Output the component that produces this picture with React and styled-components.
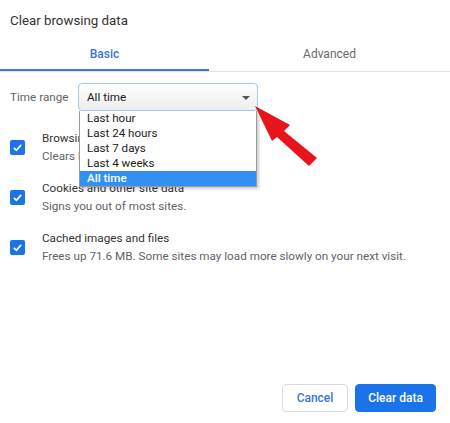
import styled, { createGlobalStyle } from "styled-components";

const GlobalStyle = createGlobalStyle`
  body {
    margin: 0;
    background: #fff;
    font-family: Roboto, "Liberation Sans", Arial, sans-serif;
  }
`;

const Dialog = styled.div`
  position: relative;
  width: 450px;
  height: 423px;
  display: flex;
  flex-direction: column;
  background: #fff;
  overflow: hidden;
`;

const Title = styled.h1`
  margin: 0;
  padding: 11px 10px 0;
  font-size: 13.3px;
  line-height: 20px;
  font-weight: 400;
  color: #333;
`;

const TabBar = styled.div`
  display: flex;
  margin-top: 5px;
  border-bottom: 1px solid #e3e3e3;
`;

const Tab = styled.div`
  height: 35px;
  display: flex;
  align-items: center;
  justify-content: center;
  font-size: 12px;
  font-weight: ${(p) => (p.$active ? 500 : 400)};
  color: ${(p) => (p.$active ? "#3a78d4" : "#6a6a6a")};
  box-shadow: ${(p) => (p.$active ? "inset 0 -2px 0 #3a78d4" : "none")};
  width: ${(p) => (p.$active ? "209px" : "auto")};
  flex: ${(p) => (p.$active ? "none" : "1")};
`;

const TimeRow = styled.div`
  display: flex;
  align-items: center;
  margin-top: 11px;
  height: 28px;
`;

const Label = styled.span`
  flex: none;
  width: 78px;
  padding-left: 10px;
  box-sizing: border-box;
  white-space: nowrap;
  font-size: 11.7px;
  color: #5f6368;
`;

const SelectWrap = styled.div`
  position: relative;
  flex: none;
  width: 180px;
  height: 28px;
`;

const SelectBox = styled.div`
  box-sizing: border-box;
  height: 28px;
  display: flex;
  align-items: center;
  justify-content: space-between;
  padding: 0 7px 0 8px;
  border: 1px solid #a8c6ef;
  border-radius: 4px;
  background: linear-gradient(#ffffff, #ededed);
  font-size: 11.7px;
  color: #202124;
`;

const Caret = styled.span`
  width: 0;
  height: 0;
  border-left: 4px solid transparent;
  border-right: 4px solid transparent;
  border-top: 4px solid #555;
  margin-top: 1px;
`;

const Menu = styled.ul`
  position: absolute;
  top: 28px;
  left: 1px;
  width: 178px;
  margin: 0;
  padding: 0;
  list-style: none;
  background: #fff;
  border: 1px solid #9a9a9a;
  border-top: none;
  box-sizing: border-box;
  box-shadow: 2px 2px 3px rgba(0, 0, 0, 0.2);
  z-index: 2;
`;

const Option = styled.li`
  height: 15px;
  line-height: 15px;
  padding-left: 7px;
  font-size: 11.6px;
  color: ${(p) => (p.$selected ? "#fff" : "#222")};
  background: ${(p) => (p.$selected ? "#3290f2" : "transparent")};
  font-weight: ${(p) => (p.$selected ? 500 : 400)};
`;

const List = styled.div`
  display: flex;
  flex-direction: column;
  gap: 14px;
  margin-top: 18px;
`;

const Item = styled.div`
  display: flex;
  align-items: center;
  padding-left: 10px;
  gap: 17px;
`;

const Check = styled.span`
  width: 15px;
  height: 15px;
  border-radius: 2px;
  background: #1a73e8;
  display: flex;
  align-items: center;
  justify-content: center;
  flex: none;
`;

const ItemText = styled.div`
  display: flex;
  flex-direction: column;
  font-size: 11.7px;
  line-height: 18px;
`;

const ItemTitle = styled.span`
  color: #333;
`;

const ItemSub = styled.span`
  color: #5f6368;
`;

const Footer = styled.div`
  margin-top: auto;
  display: flex;
  justify-content: flex-end;
  gap: 7px;
  padding: 0 14px 11px;
`;

const Button = styled.button`
  height: 28px;
  padding: 0;
  width: ${(p) => p.$w}px;
  border-radius: 4px;
  font-family: inherit;
  font-size: 12px;
  font-weight: 500;
  border: 1px solid ${(p) => (p.$primary ? "#1a73e8" : "#dadce0")};
  background: ${(p) => (p.$primary ? "#1a73e8" : "#fff")};
  color: ${(p) => (p.$primary ? "#fff" : "#3a78d4")};
`;

const Arrow = styled.svg`
  position: absolute;
  left: 0;
  top: 0;
  pointer-events: none;
  z-index: 3;
`;

const options = ["Last hour", "Last 24 hours", "Last 7 days", "Last 4 weeks", "All time"];

const items = [
  ["Browsing history", "Clears history"],
  ["Cookies and other site data", "Signs you out of most sites."],
  ["Cached images and files", "Frees up 71.6 MB. Some sites may load more slowly on your next visit."],
];

const CheckMark = () => (
  <svg width="11" height="11" viewBox="0 0 12 12">
    <path d="M2 6.3 L4.8 9 L10 3.2" fill="none" stroke="#fff" strokeWidth="1.9" />
  </svg>
);

export default function App() {
  return (
    <>
      <GlobalStyle />
      <Dialog>
        <Title>Clear browsing data</Title>
        <TabBar>
          <Tab $active>Basic</Tab>
          <Tab>Advanced</Tab>
        </TabBar>
        <TimeRow>
          <Label>Time range</Label>
          <SelectWrap>
            <SelectBox>
              All time
              <Caret />
            </SelectBox>
            <Menu>
              {options.map((o) => (
                <Option key={o} $selected={o === "All time"}>
                  {o}
                </Option>
              ))}
            </Menu>
          </SelectWrap>
        </TimeRow>
        <List>
          {items.map(([t, s]) => (
            <Item key={t}>
              <Check>
                <CheckMark />
              </Check>
              <ItemText>
                <ItemTitle>{t}</ItemTitle>
                <ItemSub>{s}</ItemSub>
              </ItemText>
            </Item>
          ))}
        </List>
        <Footer>
          <Button $w={66}>Cancel</Button>
          <Button $w={81} $primary>
            Clear data
          </Button>
        </Footer>
        <Arrow width="450" height="423">
          <polygon
            points="255,106 290,125 284,131 317,158 309,166 277,137 272,141"
            fill="#e8141c"
          />
        </Arrow>
      </Dialog>
    </>
  );
}
